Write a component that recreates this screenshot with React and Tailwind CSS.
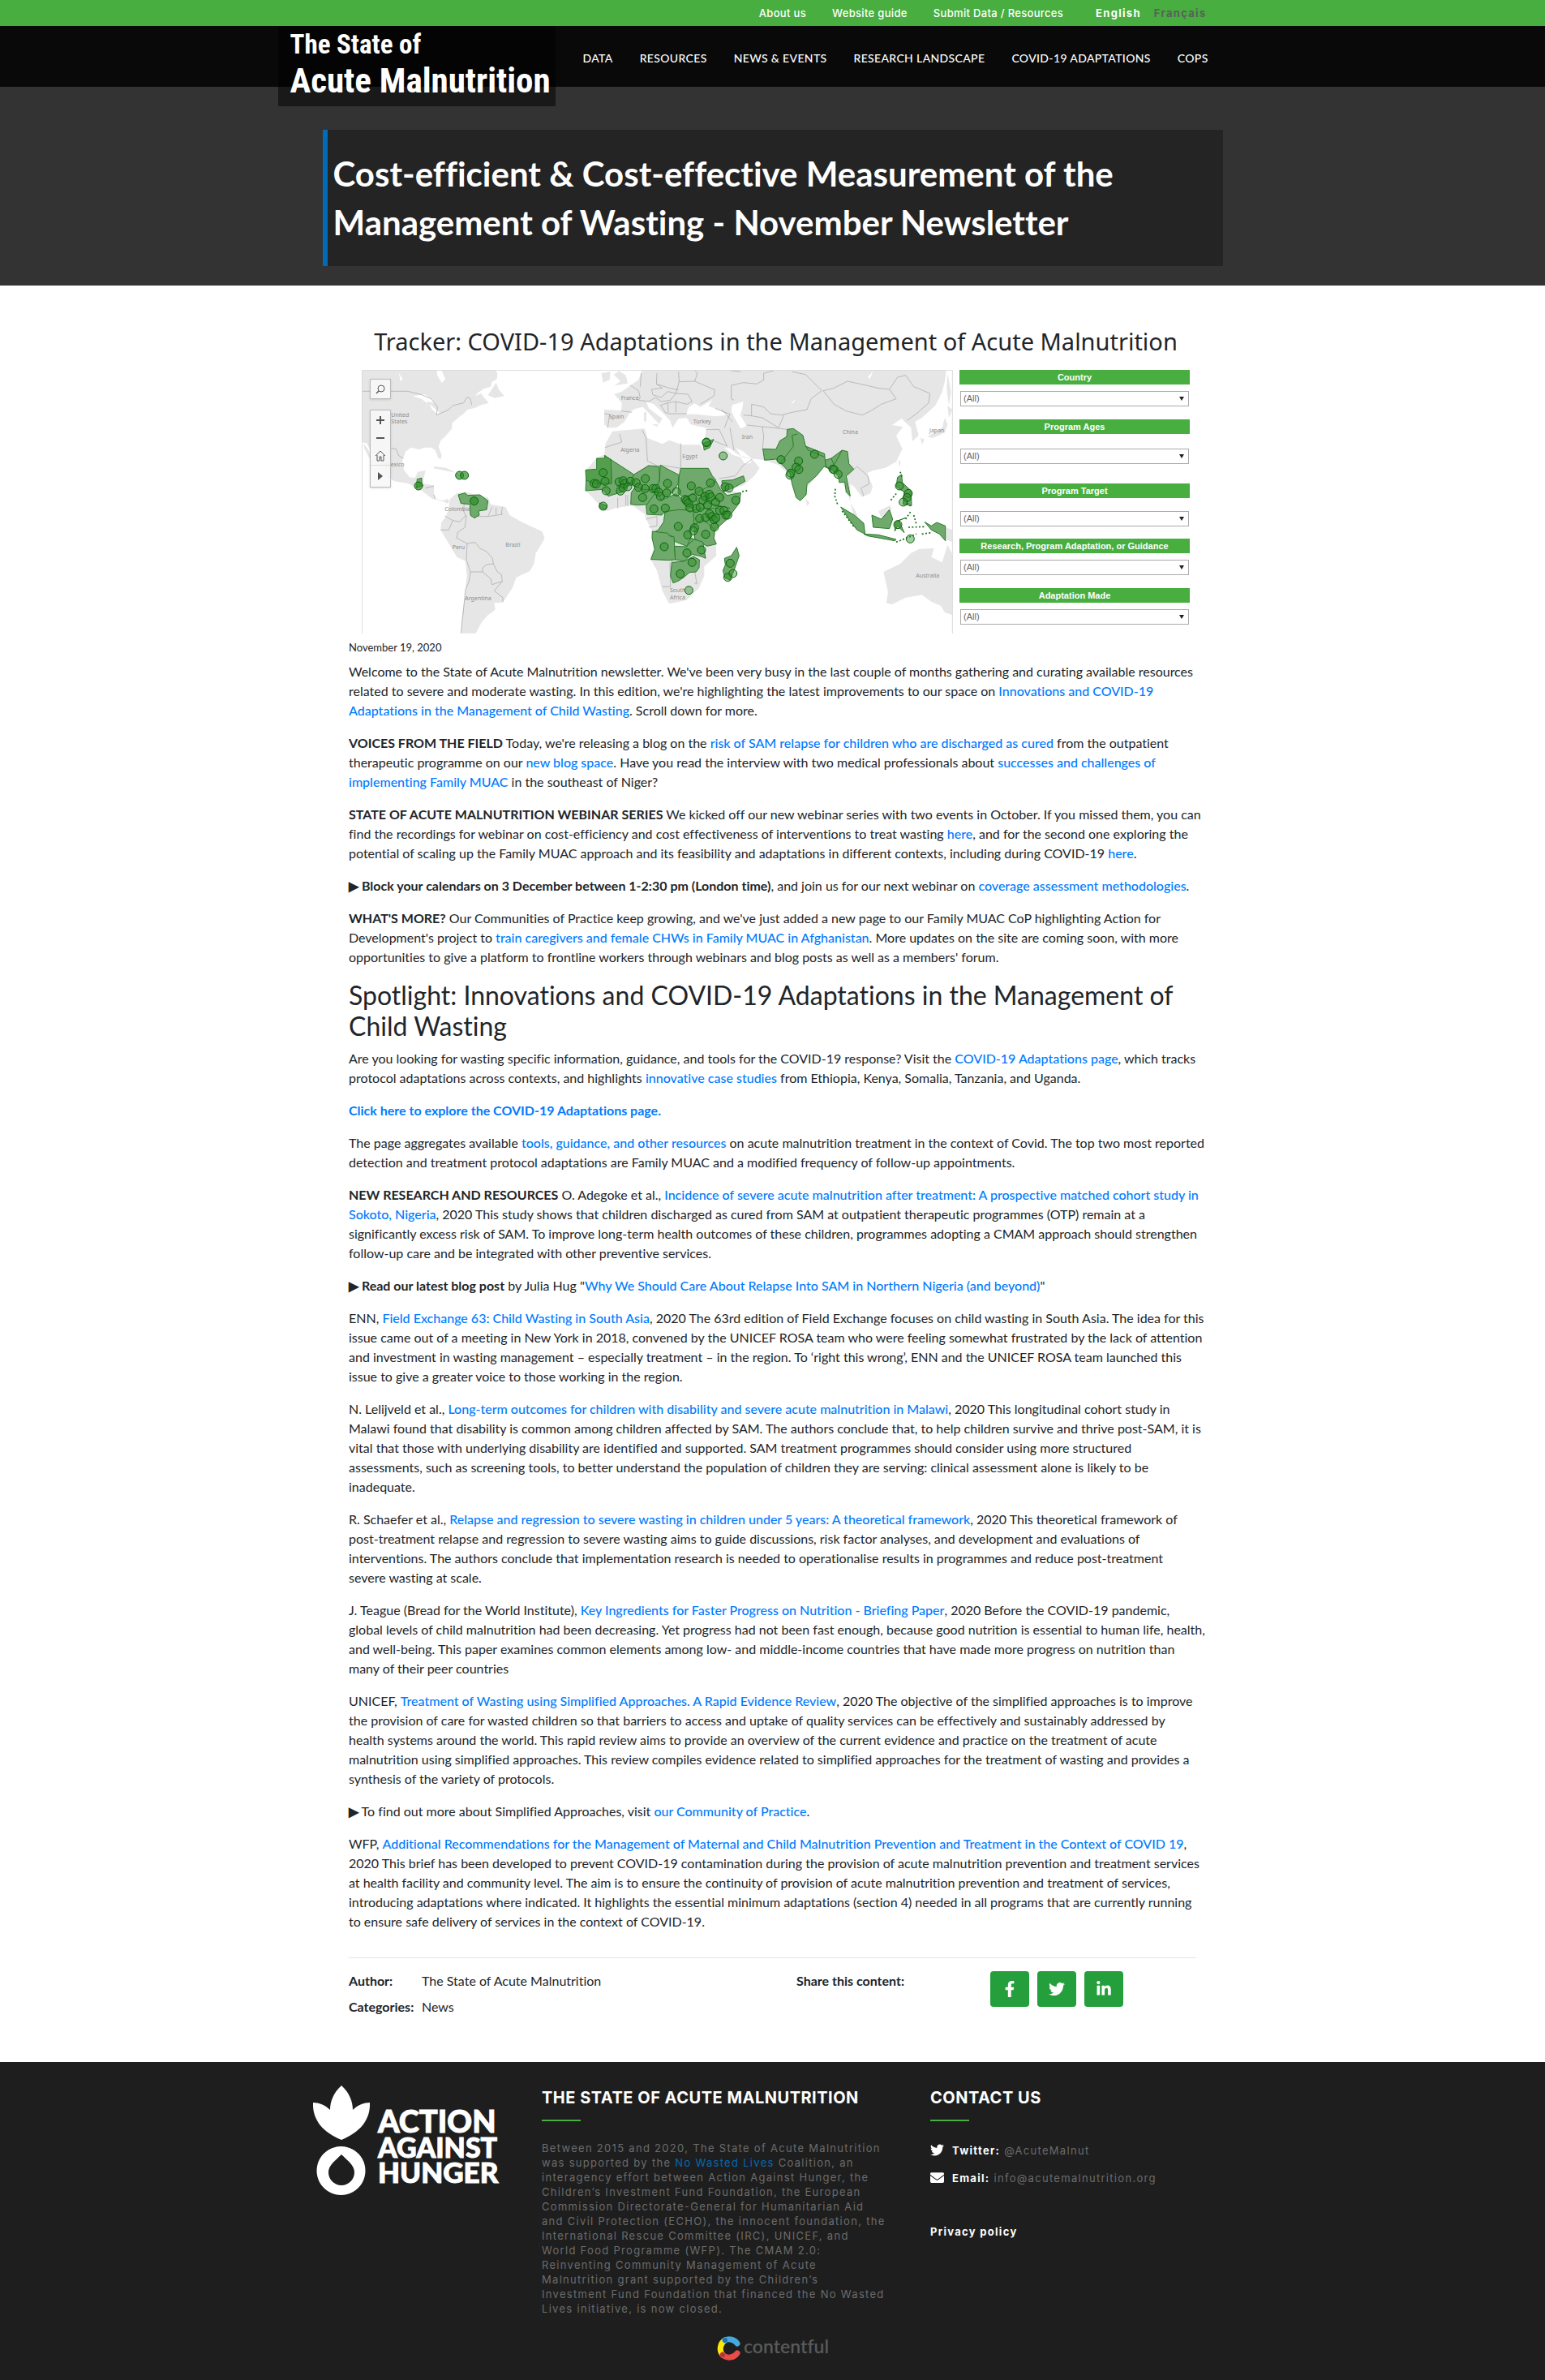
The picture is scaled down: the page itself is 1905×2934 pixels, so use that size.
import React from "react";
import { FaFacebookF, FaTwitter, FaLinkedinIn, FaEnvelope } from "react-icons/fa";

const topLinks = ["About us", "Website guide", "Submit Data / Resources"];
const navLinks = ["DATA", "RESOURCES", "NEWS & EVENTS", "RESEARCH LANDSCAPE", "COVID-19 ADAPTATIONS", "COPS"];

function Header() {
  return (
    <header className="relative z-10">
      <div className="bg-[#48ae40] font-['Inter',sans-serif] text-[13px] leading-8 text-white">
        <div className="mx-auto flex h-8 max-w-[1220px] justify-end gap-8 pr-[75px] font-medium tracking-wide">
          {topLinks.map((t) => (
            <a key={t} href="#top">{t}</a>
          ))}
          <div className="ml-2 flex gap-4 font-bold tracking-widest">
            <a href="#en">English</a>
            <a href="#fr" className="text-[#5d5d5d]">Français</a>
          </div>
        </div>
      </div>
      <div className="bg-[#090909]">
        <div className="mx-auto flex h-[75px] max-w-[1220px] items-start">
          <a
            href="#home"
            className="h-[99px] w-[342px] bg-black/50 pl-[15px] font-['Roboto_Condensed','Liberation_Sans_Narrow',sans-serif] font-bold text-white"
          >
            <span className="block pt-[3px] text-[33px] leading-[40px]">The State of</span>
            <span className="block text-[43px] leading-[48px] whitespace-nowrap">Acute Malnutrition</span>
          </a>
          <nav className="ml-[34px] flex gap-[33px] text-[14px] leading-[80px] font-medium tracking-wide text-white">
            {navLinks.map((t) => (
              <a key={t} href="#nav" className="whitespace-nowrap">{t}</a>
            ))}
          </nav>
        </div>
      </div>
    </header>
  );
}

const countries = [
  "M137 365L245 435 232 470 200 500 150 515 128 490 66 495 68 455 100 470 162 468 160 380Z",
  "M245 435L300 402 338 405 340 450 325 490 285 492 250 480 232 468Z",
  "M342 400L412 437 408 470 388 500 345 530 325 500 340 460Z",
  "M235 502L250 480 285 492 325 488 322 520 300 545 260 548 233 545Z",
  "M418 412H520L535 440 548 455 530 500 520 520 430 522 408 505 412 440Z",
  "M290 550L330 495 345 530 400 507 430 530 460 560 400 570 360 572 348 585 293 582Z",
  "M360 572L410 565 465 568 470 620 455 640 455 690 440 700 395 682 385 662 315 650 335 640 355 610Z",
  "M313 645L370 652 380 665 393 665 398 750 370 752 308 748 322 712 312 670Z",
  "M425 522L480 500 520 480 548 458 565 490 590 512 640 502 635 540 590 600 545 640 540 670 550 692 515 700 470 672 465 565Z",
  "M395 700L440 702 455 670 500 685 510 745 495 738 460 730 430 755 398 750Z",
  "M385 760L430 756 465 738 487 750 486 780 475 795 450 797 430 815 410 828 390 836 380 810Z",
  "M625 704L634 735 615 790 600 825 582 818 574 790 583 770 580 745 605 735Z",
  "M570 458L610 455 650 440 656 460 620 480 575 500Z",
  "M118 540L145 550 140 565 120 560Z",
  "M500 320L540 305 525 335 505 345Z",
  "M722 340L770 342 785 310 810 295 812 268 835 265 870 290 880 330 950 358 952 382 975 375 1015 345 1035 350 1040 395 1058 415 1030 440 1045 515 1030 500 1025 462 1005 465 1000 440 980 420 948 405 920 440 885 470 882 510 860 532 845 520 830 470 822 430 800 405 770 378 728 382Z",
  "M1010 555L1060 585 1095 615 1100 655 1070 640 1040 600Z",
  "M1125 585L1160 600 1190 565 1202 600 1190 635 1130 630Z",
  "M1095 655L1150 658 1215 675 1210 680 1110 662Z",
  "M1320 610L1345 625 1365 612 1397 625V680L1375 655 1345 640Z",
  "M1220 445L1235 435 1238 465 1270 495 1272 550 1240 545 1245 500 1215 480Z",
  "M1210 610L1250 595 1225 605 1245 650 1220 625 1210 645Z",
];

const markers = [
  [131, 428], [138, 460], [98, 468], [106, 470], [142, 495], [190, 462], [205, 458], [210, 468], [232, 460], [253, 465], [195, 496],
  [205, 485], [222, 480], [287, 450], [262, 482], [286, 487], [316, 487], [326, 487], [336, 500], [343, 516], [366, 503], [369, 468],
  [402, 499], [277, 520], [319, 562], [361, 559], [131, 552], [457, 477], [486, 497], [528, 466], [435, 527], [440, 533], [447, 540],
  [462, 522], [452, 558], [475, 560], [490, 556], [500, 530], [508, 515], [524, 508], [530, 518], [517, 548], [547, 537], [562, 520],
  [488, 598], [510, 594], [525, 580], [533, 590], [541, 602], [548, 596], [562, 568], [578, 568], [585, 585], [592, 585], [622, 530],
  [543, 629], [409, 627], [469, 632], [465, 643], [444, 658], [510, 656], [357, 702], [441, 725], [495, 714], [460, 760], [416, 802],
  [448, 863], [601, 763], [611, 801], [592, 815], [582, 480], [597, 485], [513, 315], [513, 317], [575, 366], [789, 380], [854, 385],
  [845, 408], [855, 416], [822, 437], [825, 430], [913, 360], [981, 415], [985, 417], [1000, 434], [1227, 477], [1260, 505], [1255, 520],
  [1241, 537], [1221, 620], [1267, 673],
];

const labels = [
  ["France", 197, 158], ["Spain", 153, 229], ["Algeria", 196, 351], ["Egypt", 424, 375], ["Turkey", 464, 245], ["Iran", 644, 304],
  ["China", 1017, 286], ["Japan", 1338, 278], ["Australia", 1288, 816], ["South", 378, 871], ["Africa", 378, 897],
];

function WorldMap() {
  return (
    <svg viewBox="78 228 2187 975" className="block w-full" role="img" aria-label="Map of programme adaptations">
      <g fill="#e6e6e6">
        <path d="M78 228H572L580 240 578 262 560 272 555 290 530 298 508 312 498 325 520 315 530 330 548 350 520 358 498 368 470 375 455 390 435 405 412 425 412 445 390 470 370 490 362 510 374 545 370 558 360 552 350 525 335 515 310 515 290 522 260 515 240 530 228 565 235 600 255 625 275 628 285 605 314 600 305 640 312 650 345 655 346 690 352 705 380 712 395 705 402 712 398 722 370 712 340 705 300 675 250 648 200 640 170 622 140 580 112 530 98 500 78 495Z" />
        <path d="M85 500L100 520 125 575 128 588 112 565 88 520Z" />
        <path d="M545 322L575 275 585 300 605 325 570 332ZM345 585L390 590 425 608 395 602 345 592Z" />
        <path d="M405 705L430 684 465 680 545 700 555 725 610 735 625 765 660 785 700 805 745 825 755 850 735 885 722 905 715 945 700 972 650 995 635 1035 600 1088 568 1090 572 1115 545 1135 522 1160 500 1202H445L450 1130 460 1060 467 990 462 935 430 920 400 870 370 820 372 792 390 770 398 745Z" />
      </g>
      <path fill="#fff" d="M355 228L372 228 388 262 375 276 358 250ZM215 240L230 262 222 270ZM265 325L310 318 335 335 350 350 320 345 310 395 318 350 300 335ZM330 355L365 385 360 395 335 370Z" />
      <g fill="none" stroke="#a3a3a3" strokeWidth="2">
        <path d="M78 307H248L300 320 335 335 358 365 355 395 400 375 415 360 455 350 468 328 480 335 485 358M187 518L205 520 215 545 232 555M312 665L345 658M345 690L350 705M460 680L455 750 465 772 460 810 432 830 430 850 468 870 498 866 515 888 540 900 562 925 565 945 540 948 525 960 525 975 480 975 465 930 468 870M465 765L440 790 415 785 400 820 370 820M415 785L385 768M565 945L580 975 595 985 598 1010 560 1022 555 1000 525 975M598 1010L568 1045 600 1070 600 1085M480 975L475 1010 462 1040 455 1110 445 1202M545 770L560 735M575 762L575 738M595 762L598 735M480 770L545 770 600 762" />
      </g>
      <g fill="#6fa96b" stroke="#2b7d2b" strokeWidth="3" strokeLinejoin="round">
        <path d="M435 690L460 683 470 692 515 690 545 712 540 745 510 750 513 765 495 776 480 765 478 725 445 722Z" />
        <path d="M283 632L300 628 300 650 305 655 280 665Z" />
      </g>
      <g transform="translate(840 180)">
        <g fill="#e6e6e6">
          <path d="M135 195L198 198 200 170 172 138 200 128 232 105 262 85 275 48H1400L1395 90 1385 130 1360 180 1310 225 1285 240 1298 290 1275 312 1270 262 1235 228 1200 252 1240 258 1215 292 1238 340 1215 388 1175 410 1130 420 1108 430 1128 480 1120 505 1088 518 1060 480 1045 470 1045 540 1065 570 1082 615 1060 595 1035 500 1000 440 950 405 880 490 860 530 825 440 780 400 728 382 680 376 650 350 620 335 600 300 580 262 520 265 455 250 440 225 410 228 388 262 378 235 345 200 318 175 290 165 300 190 350 228 338 248 310 218 278 185 248 192 230 205 210 240 180 262 150 262 135 250Z" />
          <path d="M190 52L215 68 222 98 172 106 195 90 170 65ZM125 60L158 55 155 85 130 95ZM282 205L292 205 290 240 282 238ZM310 248L335 250 330 258Z" />
          <path d="M165 275L285 265 295 300 350 322 375 308 425 325 490 325 510 360 560 450 572 485 640 503 630 545 590 600 545 640 550 735 505 775 505 810 485 855 440 900 375 913 350 865 330 790 305 745 320 700 310 640 290 600 285 582 240 550 180 558 145 570 110 540 68 495 65 420 107 375 135 360 140 320Z" />
          <path d="M512 268L580 260 600 300 640 365 682 378 710 410 690 440 650 475 575 500 555 450 500 345Z" />
          <path d="M1168 795L1230 765 1270 725 1300 710 1355 708 1345 740 1385 760 1405 695 1423 730V955L1395 945 1380 920 1345 905 1310 880 1250 890 1200 915 1178 910 1185 870Z" />
          <path d="M1405 180L1423 195 1410 225ZM1395 225L1405 250 1395 280 1350 300 1330 295 1385 262ZM1305 300L1320 305 1310 325ZM1225 380L1232 390 1225 408ZM880 525L895 540 885 552ZM1398 630L1423 640V685L1398 675ZM1150 570L1190 550 1200 560 1160 595ZM1405 60L1418 130 1410 180 1402 120Z" />
        </g>
        <g fill="#fff">
          <path d="M438 212L448 185 470 172 490 185 535 160 520 182 560 195 592 215 545 220 480 212ZM608 178L650 165 645 195 638 215 662 255 640 265 622 235 605 200ZM1110 75L1130 52 1118 80ZM825 172L845 155 835 170Z" />
          <path d="M578 335L600 338 625 358 650 372 680 378 678 392 655 395 640 372 610 362Z" />
        </g>
        <g fill="none" stroke="#a3a3a3" strokeWidth="2">
          <path d="M135 210L155 212 148 262M198 200L238 205M232 105L262 125 268 150 262 160 300 165 325 150 345 165 380 160M272 60L268 110M330 60L328 100 350 115 310 120 315 140 345 150 370 128 400 135 412 92 410 55M328 100L375 115 410 122M412 92L470 90 480 60 470 50M470 90L545 122 540 145 490 175M380 160L400 135 445 138 460 165 440 175 400 165 370 170 340 180M345 180L360 205 375 210 400 210 440 210M370 170L372 205M400 165L400 205M192 285L200 315 138 335M275 270L290 300 295 385M418 320V412M300 400L245 435M418 412L342 400M295 385L330 402M545 190L600 212 590 235 580 262M605 105L650 95 700 100 725 85 725 60 760 52M605 105L605 155 615 160M830 55L880 65 940 125 900 155 885 195 830 205 790 215 750 210 725 185 680 175V218L650 215M680 218L720 225 780 262 800 215M662 252L720 258 725 295 720 345M720 258L760 262 812 268M600 262L615 345M945 125L985 115 1035 90 1105 105 1145 115 1190 120 1215 155 1160 175 1120 200 1090 215 1030 200 985 175 945 125M1190 120L1220 75 1250 68 1280 110 1340 135 1335 170 1290 210 1255 235M512 268H560L590 330 540 310M560 450L620 440 650 400 682 378M1035 440L1070 405 1110 440 1115 470 1085 485 1095 515M305 750H385V765M378 760L380 850 350 850M470 795L478 840 468 835M185 520V560M215 510V550M222 510V550M290 600L330 590 330 625 300 630M570 195L610 240M640 55L600 50" />
        </g>
        <g fontFamily="Noto Sans, sans-serif" fontSize="21" fill="#8b8b8b">
          {labels.map(([t, x, y]) => (
            <text key={t} x={x} y={y}>{t}</text>
          ))}
        </g>
        <g fill="#6fa96b" stroke="#2b7d2b" strokeWidth="3" strokeLinejoin="round">
          {countries.map((d) => (
            <path key={d} d={d} />
          ))}
          <path fill="#549f4e" d="M137 365L160 380 162 468 100 470 68 455 66 418 107 415 107 375 135 375Z" />
          <path fill="none" d="M785 395L835 330 830 290 850 285M880 330L890 345 950 370M952 382L955 405 975 415M975 375L985 400 1015 345M470 620L500 600 545 640M465 568L500 560 560 560M500 500L520 540 600 560M485 545L470 520M180 480L200 470 232 470M440 700L470 672" />
        </g>
        <path fill="none" stroke="#17701b" strokeWidth="5" strokeDasharray="6 7" d="M990 488L988 515 998 545M1195 530L1220 500M1250 600L1270 570M1280 585L1290 620M1260 630L1320 628M1215 685L1290 655M1310 655L1345 650M1015 570L1060 630M645 498L668 494M1230 425L1238 450M1255 540L1268 552" />
        <g fill="#2f8d28" fillOpacity=".45" stroke="#0d6412" strokeWidth="3">
          {markers.map(([x, y], i) => (
            <circle key={i} cx={x} cy={y} r="15" />
          ))}
        </g>
      </g>
      <g fill="#2f8d28" fillOpacity=".7" stroke="#0d6412" strokeWidth="3">
        <circle cx="288" cy="657" r="15" />
        <circle cx="440" cy="618" r="15" />
        <circle cx="458" cy="618" r="15" />
        <circle cx="494" cy="713" r="15" />
      </g>
      <g fontFamily="Noto Sans, sans-serif" fontSize="21" fill="#8b8b8b">
        <text x="187" y="401">United</text>
        <text x="187" y="427">States</text>
        <text x="166" y="584">Mexico</text>
        <text x="385" y="751">Colombia</text>
        <text x="413" y="891">Peru</text>
        <text x="610" y="882">Brazil</text>
        <text x="460" y="1080">Argentina</text>
      </g>
      <path d="M79 1203V229H2263V1203" fill="none" stroke="#d9d9d9" strokeWidth="3" />
    </svg>
  );
}

const filters = [
  { label: "Country", box: "", gap: "mt-2" },
  { label: "Program Ages", box: "mt-4", gap: "mt-[18px]" },
  { label: "Program Target", box: "mt-6", gap: "mt-4" },
  { label: "Research, Program Adaptation, or Guidance", box: "mt-[15px]", gap: "mt-2" },
  { label: "Adaptation Made", box: "mt-4", gap: "mt-2" },
];

function Tracker() {
  const tool = "flex w-full items-center justify-center text-[#555]";
  return (
    <figure className="pt-[47px] pr-2 pl-4">
      <h2 className="text-center font-['Noto_Sans',sans-serif] text-[29px] leading-[44px] whitespace-nowrap text-[#212529]">
        Tracker: COVID-19 Adaptations in the Management of Acute Malnutrition
      </h2>
      <div className="mt-[13px] flex gap-2">
        <div className="relative min-w-0 flex-1">
          <WorldMap />
          <div className="absolute top-[11px] left-[10px] w-[26px]">
            <button aria-label="Search" className={`${tool} h-[25px] border border-[#bbb] bg-[#f7f7f7] shadow-sm`}>
              <svg width="12" height="12" viewBox="0 0 12 12" fill="none" stroke="currentColor">
                <circle cx="7" cy="5" r="4" />
                <path d="M4 8L1 11" strokeWidth="1.5" />
              </svg>
            </button>
            <div className="mt-[13px] h-24 border border-[#bbb] bg-[#f7f7f7]/90 shadow-sm">
              <button aria-label="Zoom in" className={`${tool} h-6`}>
                <svg width="10" height="10" viewBox="0 0 10 10" stroke="currentColor" strokeWidth="2"><path d="M5 0V10M0 5H10" /></svg>
              </button>
              <button aria-label="Zoom out" className={`${tool} h-5`}>
                <svg width="10" height="10" viewBox="0 0 10 10" stroke="currentColor" strokeWidth="2"><path d="M0 5H10" /></svg>
              </button>
              <button aria-label="Reset" className={`${tool} h-6 border-b border-[#ddd]`}>
                <svg width="14" height="14" viewBox="0 0 14 14" fill="none" stroke="currentColor"><path d="M1 7L7 1L13 7M3 6V13H6V8H8V13H11V6" /></svg>
              </button>
              <button aria-label="Expand" className={`${tool} h-[26px]`}>
                <svg width="6" height="10" viewBox="0 0 6 10" fill="currentColor"><path d="M0 0L6 5L0 10Z" /></svg>
              </button>
            </div>
          </div>
        </div>
        <div className="w-[284px] shrink-0 font-['Liberation_Sans',sans-serif] text-[11px]">
          {filters.map((f) => (
            <label key={f.label} className={`block ${f.box}`}>
              <span className="block h-[18px] bg-[#48ae40] text-center leading-[18px] font-bold whitespace-nowrap text-white">{f.label}</span>
              <span className={`relative mx-px block ${f.gap}`}>
                <select className="block h-[19px] w-full appearance-none border border-[#aaa] bg-white pl-[3px] leading-[17px] text-[#666]">
                  <option>(All)</option>
                </select>
                <svg className="pointer-events-none absolute top-[7px] right-[6px]" width="6" height="5" viewBox="0 0 6 5" fill="#222"><path d="M0 0H6L3 5Z" /></svg>
              </span>
            </label>
          ))}
        </div>
      </div>
    </figure>
  );
}

function A({ children }) {
  return <a href="#link" className="font-medium text-[#007bff]">{children}</a>;
}

function B({ children }) {
  return <strong className="font-bold">{children}</strong>;
}

function Article() {
  return (
    <article className="-mr-3 flex flex-col gap-4 text-[16px] leading-6 text-[#212529]">
      <p>
        Welcome to the State of Acute Malnutrition newsletter. We've been very busy in the last couple of months gathering and curating available resources related to severe and moderate wasting. In this edition, we're highlighting the latest improvements to our space on <A>Innovations and COVID-19 Adaptations in the Management of Child Wasting</A>. Scroll down for more.
      </p>
      <p>
        <B>VOICES FROM THE FIELD</B> Today, we're releasing a blog on the <A>risk of SAM relapse for children who are discharged as cured</A> from the outpatient therapeutic programme on our <A>new blog space</A>. Have you read the interview with two medical professionals about <A>successes and challenges of implementing Family MUAC</A> in the southeast of Niger?
      </p>
      <p>
        <B>STATE OF ACUTE MALNUTRITION WEBINAR SERIES</B> We kicked off our new webinar series with two events in October. If you missed them, you can find the recordings for webinar on cost-efficiency and cost effectiveness of interventions to treat wasting <A>here</A>, and for the second one exploring the potential of scaling up the Family MUAC approach and its feasibility and adaptations in different contexts, including during COVID-19 <A>here</A>.
      </p>
      <p>
        <B>▶ Block your calendars on 3 December between 1-2:30 pm (London time)</B>, and join us for our next webinar on <A>coverage assessment methodologies</A>.
      </p>
      <p>
        <B>WHAT'S MORE?</B> Our Communities of Practice keep growing, and we've just added a new page to our Family MUAC CoP highlighting Action for Development's project to <A>train caregivers and female CHWs in Family MUAC in Afghanistan</A>. More updates on the site are coming soon, with more opportunities to give a platform to frontline workers through webinars and blog posts as well as a members' forum.
      </p>
      <h2 className="-mb-2 pb-px text-[32px] leading-[38px] font-normal">
        Spotlight: Innovations and COVID-19 Adaptations in the Management of Child Wasting
      </h2>
      <p>
        Are you looking for wasting specific information, guidance, and tools for the COVID-19 response? Visit the <A>COVID-19 Adaptations page</A>, which tracks protocol adaptations across contexts, and highlights <A>innovative case studies</A> from Ethiopia, Kenya, Somalia, Tanzania, and Uganda.
      </p>
      <p>
        <a href="#explore" className="font-bold text-[#007bff]">Click here to explore the COVID-19 Adaptations page.</a>
      </p>
      <p>
        The page aggregates available <A>tools, guidance, and other resources</A> on acute malnutrition treatment in the context of Covid. The top two most reported detection and treatment protocol adaptations are Family MUAC and a modified frequency of follow-up appointments.
      </p>
      <p>
        <B>NEW RESEARCH AND RESOURCES</B> O. Adegoke et al., <A>Incidence of severe acute malnutrition after treatment: A prospective matched cohort study in Sokoto, Nigeria</A>, 2020 This study shows that children discharged as cured from SAM at outpatient therapeutic programmes (OTP) remain at a significantly excess risk of SAM. To improve long-term health outcomes of these children, programmes adopting a CMAM approach should strengthen follow-up care and be integrated with other preventive services.
      </p>
      <p>
        <B>▶ Read our latest blog post</B> by Julia Hug "<A>Why We Should Care About Relapse Into SAM in Northern Nigeria (and beyond)</A>"
      </p>
      <p>
        ENN, <A>Field Exchange 63: Child Wasting in South Asia</A>, 2020 The 63rd edition of Field Exchange focuses on child wasting in South Asia. The idea for this issue came out of a meeting in New York in 2018, convened by the UNICEF ROSA team who were feeling somewhat frustrated by the lack of attention and investment in wasting management – especially treatment – in the region. To ‘right this wrong’, ENN and the UNICEF ROSA team launched this issue to give a greater voice to those working in the region.
      </p>
      <p>
        N. Lelijveld et al., <A>Long-term outcomes for children with disability and severe acute malnutrition in Malawi</A>, 2020 This longitudinal cohort study in Malawi found that disability is common among children affected by SAM. The authors conclude that, to help children survive and thrive post-SAM, it is vital that those with underlying disability are identified and supported. SAM treatment programmes should consider using more structured assessments, such as screening tools, to better understand the population of children they are serving: clinical assessment alone is likely to be inadequate.
      </p>
      <p>
        R. Schaefer et al., <A>Relapse and regression to severe wasting in children under 5 years: A theoretical framework</A>, 2020 This theoretical framework of post-treatment relapse and regression to severe wasting aims to guide discussions, risk factor analyses, and development and evaluations of interventions. The authors conclude that implementation research is needed to operationalise results in programmes and reduce post-treatment severe&nbsp;wasting at scale.
      </p>
      <p>
        J. Teague (Bread for the World Institute), <A>Key Ingredients for Faster Progress on Nutrition - Briefing Paper</A>, 2020 Before the COVID-19 pandemic, global levels of child malnutrition had been decreasing. Yet progress had not been fast enough, because good nutrition is essential to human life, health, and well-being. This paper examines common elements among low- and middle-income countries that have made more progress on nutrition than many of their peer countries
      </p>
      <p>
        UNICEF, <A>Treatment of Wasting using Simplified Approaches. A Rapid Evidence Review</A>, 2020 The objective of the simplified approaches is to improve the provision of care for wasted children so that barriers to access and uptake of quality services can be effectively and sustainably addressed by health&nbsp;systems around the world. This rapid review aims to provide an overview of the current evidence and practice on the treatment of acute malnutrition using simplified approaches. This review compiles evidence related to simplified approaches for the treatment of wasting and provides a synthesis of the variety of protocols.
      </p>
      <p>
        <B>▶</B> To find out more about Simplified Approaches, visit <A>our Community of Practice</A>.
      </p>
      <p>
        WFP, <A>Additional Recommendations for the Management of Maternal and Child Malnutrition Prevention and Treatment in the Context of COVID 19</A>, 2020 This brief has been developed to prevent COVID-19 contamination during the provision of acute malnutrition prevention and treatment services at health facility and community level. The aim is to ensure the continuity of provision of acute malnutrition prevention and treatment of services, introducing adaptations where indicated. It highlights the essential minimum adaptations (section 4) needed in all programs that are currently running to ensure safe delivery of services in the context of COVID-19.
      </p>
    </article>
  );
}

function ShareButton({ label, children }) {
  return (
    <button aria-label={label} className="flex h-11 w-12 items-center justify-center rounded bg-[#259e3c] text-[20px] text-white">
      {children}
    </button>
  );
}

function Meta() {
  return (
    <div className="mt-8 flex items-start border-t border-[#e3e3e3] pt-4 text-[16px] leading-6 text-[#212529]">
      <dl className="grid w-[552px] grid-cols-[90px_1fr] gap-y-2">
        <dt className="font-bold">Author:</dt>
        <dd>The State of Acute Malnutrition</dd>
        <dt className="font-bold">Categories:</dt>
        <dd>News</dd>
      </dl>
      <div className="w-[239px] font-bold">Share this content:</div>
      <div className="flex gap-[10px]">
        <ShareButton label="Facebook"><FaFacebookF /></ShareButton>
        <ShareButton label="Twitter"><FaTwitter /></ShareButton>
        <ShareButton label="LinkedIn"><FaLinkedinIn /></ShareButton>
      </div>
    </div>
  );
}

function FooterHeading({ children }) {
  return (
    <>
      <h3 className="text-[20px] leading-6 font-bold tracking-wide text-white">{children}</h3>
      <div className="mt-[15px] h-[2px] w-12 bg-[#48ae40]" />
    </>
  );
}

function Footer() {
  return (
    <footer className="bg-[#1e1e1e] pb-6 font-['Inter',sans-serif] text-[13px] leading-[18px] tracking-widest text-[#6c6c6c]">
      <div className="mx-auto grid max-w-[1135px] grid-cols-[283px_479px_1fr] pt-7">
        <svg width="240" height="138" viewBox="0 0 240 138" fill="#fff" role="img" aria-label="Action Against Hunger">
          <path d="M36 1C46 10 50 21 50 31C56 25 64 22 71 22C72 44 58 59 36 68C14 59 0 44 1 22C8 22 16 25 22 31C22 21 26 10 36 1Z" />
          <path fillRule="evenodd" d="M36 76A30 30 0 1 1 35 76ZM36 86C43 93 52 99 52 108A16 16 0 0 1 20 108C20 99 29 93 36 86Z" />
          <g fontFamily="Lato, sans-serif" fontWeight="900" letterSpacing="0" stroke="#fff">
            <text x="81" y="59" fontSize="38">ACTION</text>
            <text x="81" y="90" fontSize="34">AGAINST</text>
            <text x="81" y="121" fontSize="35">HUNGER</text>
          </g>
        </svg>
        <section className="w-[430px] pt-1">
          <FooterHeading>THE STATE OF ACUTE MALNUTRITION</FooterHeading>
          <p className="mt-6">
            Between 2015 and 2020, The State of Acute Malnutrition was supported by the <a href="#nwl" className="text-[#006bb6]">No Wasted Lives</a> Coalition, an interagency effort between Action Against Hunger, the Children’s Investment Fund Foundation, the European Commission Directorate-General for Humanitarian Aid<br /> and Civil Protection (ECHO), the innocent foundation, the International Rescue Committee (IRC), UNICEF, and<br /> World Food Programme (WFP). The CMAM 2.0: Reinventing Community Management of Acute Malnutrition grant supported by the Children’s<br /> Investment Fund Foundation that financed the No Wasted Lives initiative, is now closed.
          </p>
        </section>
        <section className="pt-1">
          <FooterHeading>CONTACT US</FooterHeading>
          <ul className="mt-[27px] flex flex-col gap-4">
            <li className="flex">
              <FaTwitter className="mr-[10px] text-[17px] text-white" />
              <span><b className="text-white">Twitter:</b> <a href="#twitter">@AcuteMalnut</a></span>
            </li>
            <li className="flex">
              <FaEnvelope className="mr-[10px] text-[17px] text-white" />
              <span><b className="text-white">Email:</b> <a href="#email">info@acutemalnutrition.org</a></span>
            </li>
          </ul>
          <a href="#privacy" className="mt-12 block font-bold text-white">Privacy policy</a>
        </section>
      </div>
      <a href="#contentful" className="mt-[25px] flex justify-center" aria-label="Contentful">
        <svg width="138" height="30" viewBox="0 0 138 30" className="overflow-visible" role="img">
          <g fill="none" strokeWidth="7" strokeLinecap="round">
            <path d="M7 23A12 12 0 0 1 10 5" stroke="#fde80b" />
            <path d="M10 5A12 12 0 0 1 25 9" stroke="#45a8de" />
            <path d="M7 23A12 12 0 0 0 25 21" stroke="#ea4c4a" />
          </g>
          <circle cx="10" cy="5" r="3" fill="#1874b8" />
          <circle cx="7" cy="23" r="3" fill="#b8343c" />
          <text x="33" y="21" fontFamily="Lato, sans-serif" fontSize="23" letterSpacing="0" fill="#5a5a5a" fontWeight="600">contentful</text>
        </svg>
      </a>
    </footer>
  );
}

export default function App() {
  return (
    <div className="bg-white font-['Lato',sans-serif] [font-variant-ligatures:no-common-ligatures]">
      <Header />
      <div className="bg-[#333] pt-[53px] pb-6">
        <h1 className="mx-auto max-w-[1110px] border-l-[6px] border-[#006bb6] bg-[#242424] py-6 pr-24 pl-[7px] text-[42px] leading-[60px] font-bold text-white">
          Cost-efficient & Cost-effective Measurement of the Management of Wasting - November Newsletter
        </h1>
      </div>
      <main className="mx-auto max-w-[1045px] pb-14">
        <Tracker />
        <time className="mt-[7px] mb-2 block text-[13px] leading-5 text-[#212529]">November 19, 2020</time>
        <Article />
        <Meta />
      </main>
      <Footer />
    </div>
  );
}
